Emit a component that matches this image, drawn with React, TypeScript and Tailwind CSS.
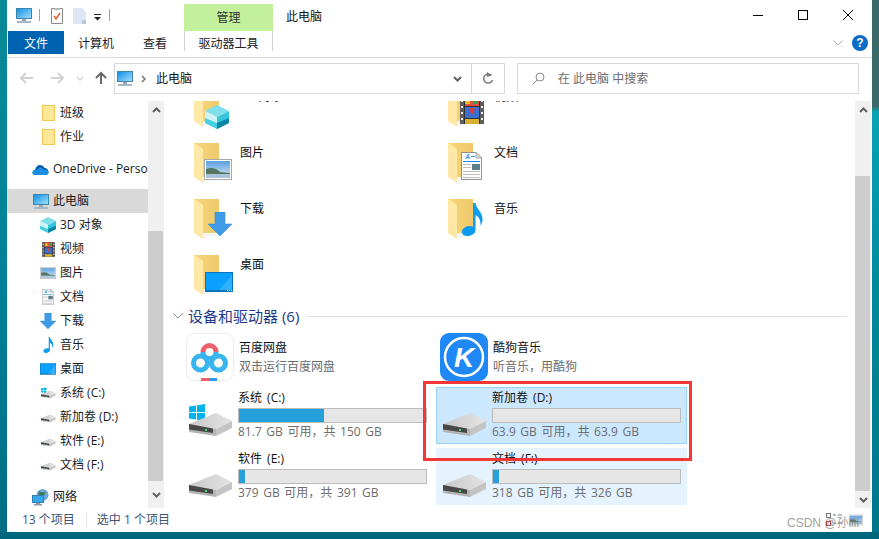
import type { ReactNode, SVGProps } from "react";

type IconProps = SVGProps<SVGSVGElement>;

function PcIcon(props: IconProps) {
  return (
    <svg viewBox="0 0 16 15" {...props}>
      <defs>
        <linearGradient id="pcScreen" x1="0" y1="0" x2="1" y2="1">
          <stop offset="0" stopColor="#0b8fe6" />
          <stop offset="1" stopColor="#a6e0ff" />
        </linearGradient>
      </defs>
      <rect x="0.5" y="0.5" width="15" height="10" fill="url(#pcScreen)" stroke="#3f86ac" />
      <rect x="6" y="11" width="4" height="2" fill="#9aa9b5" />
      <rect x="1" y="13" width="14" height="2" fill="#a8b7c4" />
    </svg>
  );
}

function Cube(props: IconProps) {
  return (
    <svg viewBox="0 0 24 24" {...props}>
      <path d="M12 0 24 6 12 12 0 6Z" fill="#7fe0ec" />
      <path d="M0 6 12 12V24L0 18Z" fill="#cdf3f6" />
      <path d="M24 6 12 12V24L24 18Z" fill="#35c5da" />
      <path d="M24 13 12 18V24L24 18Z" fill="#0a86a6" />
      <path d="M0 13 12 18V24L0 18Z" fill="#45d0e2" />
    </svg>
  );
}

function Film(props: IconProps) {
  return (
    <svg viewBox="0 0 24 27" {...props}>
      <rect width="24" height="27" fill="#5d5d5d" />
      <rect x="4" width="16" height="27" fill="#2f2f38" />
      <rect x="5" y="0" width="14" height="9" fill="#e0503c" />
      <rect x="5" y="2" width="5" height="5" fill="#e8c020" />
      <rect x="13" y="1" width="4" height="6" fill="#38a050" />
      <rect x="5" y="10" width="14" height="11" fill="#3a6fd0" />
      <path d="M9 11h6l-2 6h-2Z" fill="#d04040" />
      <rect x="5" y="22" width="14" height="5" fill="#d8b030" />
      <rect x="1" y="3" width="2" height="2" fill="#eee" />
      <rect x="1" y="9" width="2" height="2" fill="#eee" />
      <rect x="1" y="15" width="2" height="2" fill="#eee" />
      <rect x="1" y="21" width="2" height="2" fill="#eee" />
      <rect x="21" y="3" width="2" height="2" fill="#eee" />
      <rect x="21" y="9" width="2" height="2" fill="#eee" />
      <rect x="21" y="15" width="2" height="2" fill="#eee" />
      <rect x="21" y="21" width="2" height="2" fill="#eee" />
    </svg>
  );
}

function Picture(props: IconProps) {
  return (
    <svg viewBox="0 0 28 21" {...props}>
      <defs>
        <linearGradient id="picSky" x1="0" y1="0" x2="0" y2="1">
          <stop offset="0" stopColor="#5c9fe0" />
          <stop offset="1" stopColor="#d8ecf6" />
        </linearGradient>
      </defs>
      <rect x="0.5" y="0.5" width="27" height="20" fill="#fff" stroke="#a8a8a8" />
      <rect x="2" y="2" width="24" height="17" fill="url(#picSky)" />
      <path d="M2 10C8 8 12 9 16 13L26 14V16H2Z" fill="#54755f" />
      <rect x="2" y="15" width="24" height="4" fill="#a9c4d8" />
    </svg>
  );
}

function Doc(props: IconProps) {
  return (
    <svg viewBox="0 0 21 28" {...props}>
      <path d="M.5.5H15L20.5 6V27.5H.5Z" fill="#fff" stroke="#8f8f8f" />
      <path d="M15 .5V6H20.5Z" fill="#dcdcdc" stroke="#a8a8a8" />
      <text x="4" y="7" fontSize="7" fontStyle="italic" fontWeight="700" fill="#2f9be0" fontFamily="Liberation Sans, sans-serif">A</text>
      <rect x="10" y="4" width="4" height="1" fill="#2f9be0" />
      <rect x="2" y="9" width="17" height="1" fill="#1590e0" />
      <rect x="2" y="12" width="8" height="1" fill="#bbb" />
      <rect x="2" y="15" width="8" height="1" fill="#bbb" />
      <rect x="11" y="12" width="8" height="6" fill="#5d7f8c" />
      <rect x="2" y="19" width="17" height="1" fill="#bbb" />
      <rect x="2" y="22" width="17" height="1" fill="#bbb" />
      <rect x="2" y="25" width="17" height="1" fill="#bbb" />
    </svg>
  );
}

function ArrowDown(props: IconProps) {
  return (
    <svg viewBox="0 0 24 24" {...props}>
      <path d="M7 0H17V12H24L12 24 0 12H7Z" fill="#3f9be8" stroke="#2f86d0" strokeWidth="0.5" />
    </svg>
  );
}

function Note(props: IconProps) {
  return (
    <svg viewBox="0 0 21 33" {...props}>
      <path d="M11 0H13.5C14 6 21 9 20.5 17 20.3 19.5 19.5 21 18.5 23 19 17 16.5 13.5 13.5 12V27C13.5 30.5 9.5 33 5.5 33 2 33 0 31.5 0 29 0 25.5 4 23 7.5 23 9 23 10 23.2 11 23.8Z" fill="#0a9cf0" />
    </svg>
  );
}

function DesktopIcon(props: IconProps) {
  return (
    <svg viewBox="0 0 28 20" {...props}>
      <rect width="28" height="20" fill="#0a74bd" />
      <rect x="1" y="1" width="26" height="17" fill="#0aa0ff" />
      <path d="M14 18 27 3V18Z" fill="#2cb0ff" />
      <rect x="22" y="18" width="1" height="1" fill="#fff" />
      <rect x="24" y="18" width="1" height="1" fill="#fff" />
      <rect x="26" y="18" width="1" height="1" fill="#fff" />
    </svg>
  );
}

function Folder({ children }: { children?: ReactNode }) {
  return (
    <svg viewBox="0 0 40 42" className="w-[40px] h-[42px] shrink-0">
      <defs>
        <linearGradient id="folderBack" x1="0" y1="0" x2="1" y2="0">
          <stop offset="0" stopColor="#f5d77e" />
          <stop offset="1" stopColor="#f0c96a" />
        </linearGradient>
      </defs>
      <path d="M0 0H25V34H8Z" fill="url(#folderBack)" />
      <path d="M0 0 9 6V40L0 34Z" fill="#ffe8a6" />
      <path d="M8 40 9 34H25V36Z" fill="#ececec" opacity="0.5" />
      {children}
    </svg>
  );
}

function Drive({ windows, className }: { windows?: boolean; className?: string }) {
  return (
    <svg viewBox="0 0 44 33" className={className}>
      <defs>
        <linearGradient id="driveTop" x1="0" y1="0" x2="1" y2="0">
          <stop offset="0" stopColor="#c8c8c8" />
          <stop offset="1" stopColor="#e4e4e4" />
        </linearGradient>
      </defs>
      {windows && (
        <g fill="#00b4f0">
          <path d="M0 2.5 7 1.5V8H0Z" />
          <path d="M8 1.3 16 0V8H8Z" />
          <path d="M0 9H7V15.5L0 14.5Z" />
          <path d="M8 9H16V17L8 15.7Z" />
        </g>
      )}
      <path d="M0 20 27 9 43 17 27 25Z" fill="url(#driveTop)" />
      <path d="M0 20 27 25V32L0 28Z" fill="#b4b4b4" />
      <path d="M0 20 24 24.500V29L0 25.500Z" fill="#484848" />
      <path d="M27 25 43 17V24L27 32Z" fill="#c4c4c4" />
      <rect x="16" y="25" width="2" height="2" fill="#3fe060" />
    </svg>
  );
}

function Chevron({ dir, className }: { dir: "up" | "down"; className?: string }) {
  return (
    <svg viewBox="0 0 9 6" className={className}>
      <path d={dir === "up" ? "M1 5 4.500 1.500 8 5" : "M1 1 4.500 4.500 8 1"} fill="none" stroke="#606060" strokeWidth="2" />
    </svg>
  );
}

function SmallFolder() {
  return <div className="w-[13px] h-[16px] bg-[#ffe79a] border border-[#f1c94f]" />;
}

function OneDriveIcon() {
  return (
    <svg viewBox="0 0 16 11" className="w-[17px] h-[11px]">
      <path d="M3 11C1 11 0 9.800 0 8.500 0 7 1.200 6 2.500 6 3 3 5 1 7.500 1 9.500 1 11 2 11.800 3.800 14.500 4 16 6 16 8 16 10 14.800 11 13 11Z" fill="#0a5fb4" />
      <path d="M6 4.500C8 3.500 10 4 11 6 13 5.500 16 6.500 16 8.500 16 10 14.800 11 13 11H3C1 11 0 9.800 0 8.500 0 7 2 5.500 4 6.200 4.500 5.500 5 5 6 4.500Z" fill="#1b8fe0" />
    </svg>
  );
}

function NetworkIcon() {
  return (
    <svg viewBox="0 0 17 17" className="w-[17px] h-[17px]">
      <circle cx="10.500" cy="6" r="6" fill="#6fa8d8" />
      <path d="M7 2C9 4 12 3 14 3 13 6 10 7 9 9 7 8 6 5 7 2Z" fill="#3c7a50" />
      <rect x="0.500" y="6.500" width="11" height="7" fill="#39a5ea" stroke="#2f7fb0" />
      <rect x="4" y="14" width="4" height="1" fill="#8d9aa6" />
      <rect x="2" y="15" width="8" height="1.500" fill="#8d9aa6" />
    </svg>
  );
}

function BaiduIcon() {
  return (
    <svg viewBox="0 0 48 48" className="w-[48px] h-[48px] shrink-0">
      <rect x="0.500" y="0.500" width="47" height="47" rx="8" fill="#fff" stroke="#ececec" />
      <g fill="none" strokeWidth="5">
        <circle cx="14.500" cy="30" r="7" stroke="#38b4ef" />
        <circle cx="32.500" cy="30" r="7" stroke="#38b4ef" />
        <path d="M17 19A6.500 6.500 0 0 0 30 19" stroke="#38b4ef" />
        <path d="M17 19A6.500 6.500 0 0 1 30 19" stroke="#ee5f6b" />
      </g>
      <rect x="15" y="45" width="8" height="3" fill="#ee5f6b" />
      <rect x="23" y="45" width="8" height="3" fill="#2f9be8" />
    </svg>
  );
}

function KugouIcon() {
  return (
    <svg viewBox="0 0 48 48" className="w-[48px] h-[48px] shrink-0">
      <rect width="48" height="48" rx="9" fill="#1f88f5" />
      <circle cx="24" cy="24" r="19" fill="none" stroke="#fff" strokeWidth="2.500" />
      <text x="24" y="34" textAnchor="middle" fontSize="28" fontWeight="700" fontStyle="italic" fill="#fff" fontFamily="Liberation Sans, sans-serif">K</text>
    </svg>
  );
}

function SideRow({ icon, label, indent, className }: { icon: ReactNode; label: string; indent?: boolean; className?: string }) {
  return (
    <div className={`h-[24px] flex items-center whitespace-nowrap ${indent ? "pl-[33px]" : "pl-[25px]"} ${className ?? ""}`}>
      <div className={`h-[24px] flex items-center justify-center shrink-0 ${indent ? "w-[16px] mr-[4px]" : "w-[17px] mr-[4px]"}`}>{icon}</div>
      <span>{label}</span>
    </div>
  );
}

function Sidebar() {
  return (
    <div className="w-[141px] shrink-0 overflow-hidden text-[12px] leading-[16px] text-[#1a1a1a]">
      <SideRow indent icon={<SmallFolder />} label="班级" />
      <SideRow indent icon={<SmallFolder />} label="作业" />
      <SideRow icon={<OneDriveIcon />} label="OneDrive - Personal" className="mt-[8px]" />
      <SideRow icon={<PcIcon className="w-[16px] h-[15px]" />} label="此电脑" className="mt-[8px] bg-[#d9d9d9]" />
      <SideRow indent icon={<Cube className="w-[16px] h-[16px]" />} label="3D 对象" />
      <SideRow indent icon={<Film className="w-[13px] h-[15px]" />} label="视频" />
      <SideRow indent icon={<Picture className="w-[16px] h-[12px]" />} label="图片" />
      <SideRow indent icon={<Doc className="w-[12px] h-[16px]" />} label="文档" />
      <SideRow indent icon={<ArrowDown className="w-[16px] h-[16px]" />} label="下载" />
      <SideRow indent icon={<Note className="w-[11px] h-[16px]" />} label="音乐" />
      <SideRow indent icon={<DesktopIcon className="w-[16px] h-[12px]" />} label="桌面" />
      <SideRow indent icon={<Drive windows className="w-[15px] h-[12px]" />} label="系统 (C:)" />
      <SideRow indent icon={<Drive className="w-[15px] h-[12px]" />} label="新加卷 (D:)" />
      <SideRow indent icon={<Drive className="w-[15px] h-[12px]" />} label="软件 (E:)" />
      <SideRow indent icon={<Drive className="w-[15px] h-[12px]" />} label="文档 (F:)" />
      <SideRow icon={<NetworkIcon />} label="网络" className="mt-[8px]" />
    </div>
  );
}

function ScrollBar({ thumbTop, thumbBottom, className }: { thumbTop: string; thumbBottom: string; className?: string }) {
  return (
    <div className={`w-[16px] shrink-0 flex flex-col bg-[#f0f0f0] ${className ?? ""}`}>
      <div className={`${thumbTop} flex justify-center pt-[6px] shrink-0`}>
        <Chevron dir="up" className="w-[9px] h-[6px]" />
      </div>
      <div className="grow bg-[#cdcdcd] w-[15px]" />
      <div className={`${thumbBottom} flex justify-center items-center shrink-0`}>
        <Chevron dir="down" className="w-[9px] h-[6px]" />
      </div>
    </div>
  );
}

function FolderTile({ icon, label }: { icon: ReactNode; label: string }) {
  return (
    <div className="h-[56px] w-[251px] pl-[12px] pt-[2px] flex">
      <Folder>{icon}</Folder>
      <span className="ml-[6px] mt-[2px] text-[12px] leading-[16px] text-[#111]">{label}</span>
    </div>
  );
}

function AppTile({ icon, name, desc }: { icon: ReactNode; name: string; desc: string }) {
  return (
    <div className="h-[54px] w-[251px] pl-[4px] pt-[3px] flex">
      {icon}
      <div className="ml-[5px] pt-[7px] text-[12px] leading-[16px]">
        <div className="text-[#111]">{name}</div>
        <div className="mt-[3px] text-[#6d6d6d]">{desc}</div>
      </div>
    </div>
  );
}

function DriveTile({ name, used, info, windows, tone, className }: { name: string; used: number; info: string; windows?: boolean; tone?: string; className?: string }) {
  return (
    <div className={`h-[57px] w-[251px] pl-[7px] flex border ${tone ?? "border-transparent"} ${className ?? ""}`}>
      <Drive windows={windows} className="w-[44px] h-[33px] mt-[16px] -ml-px shrink-0" />
      <div className="ml-[5px] pt-[2px] text-[12px] leading-[16px] w-[189px]">
        <div className="text-[#111] [word-spacing:2px]">{name}</div>
        <div className="mt-[2px] h-[15px] border border-[#bcbcbc] bg-[#e6e6e6]">
          <div className="h-full bg-[#26a0da]" style={{ width: `${used}%` }} />
        </div>
        <div className="mt-px text-[#6d6d6d] whitespace-nowrap [word-spacing:1.500px]">{info}</div>
      </div>
    </div>
  );
}

function MainPane() {
  return (
    <div className="grow overflow-hidden pl-[18px]">
      <div className="-mt-[16px] grid grid-cols-[251px_251px] gap-x-[3px]">
        <FolderTile icon={<Cube x={11} y={18} width={24} height={24} />} label="3D 对象" />
        <FolderTile icon={<Film x={12} y={10} width={24} height={27} />} label="视频" />
        <FolderTile icon={<Picture x={10} y={16} width={28} height={21} />} label="图片" />
        <FolderTile icon={<Doc x={13} y={9} width={21} height={28} />} label="文档" />
        <FolderTile icon={<ArrowDown x={14} y={13} width={24} height={24} />} label="下载" />
        <FolderTile icon={<Note x={14} y={4} width={21} height={33} />} label="音乐" />
        <FolderTile icon={<DesktopIcon x={11} y={17} width={28} height={20} />} label="桌面" />
      </div>
      <div className="h-[14px] -ml-[9px] mr-[8px] flex items-center text-[15px] text-[#1e3a8a]">
        <svg viewBox="0 0 10 6" className="w-[10px] h-[6px] mr-[5px] shrink-0">
          <path d="M.5.5 5 5 9.500.5" fill="none" stroke="#8a8a8a" />
        </svg>
        <span className="whitespace-nowrap">设备和驱动器 (6)</span>
        <div className="grow h-px bg-[#e2e2e2] ml-[7px]" />
      </div>
      <div className="mt-[7px] grid grid-cols-[251px_251px] gap-x-[3px]">
        <AppTile icon={<BaiduIcon />} name="百度网盘" desc="双击运行百度网盘" />
        <AppTile icon={<KugouIcon />} name="酷狗音乐" desc="听音乐，用酷狗" />
        <DriveTile windows name="系统 (C:)" used={45.5} info="81.7 GB 可用，共 150 GB" className="mt-[3px]" />
        <DriveTile name="新加卷 (D:)" used={0} info="63.9 GB 可用，共 63.9 GB" tone="bg-[#cce8ff] border-[#99d1ff]" className="mt-[3px]" />
        <DriveTile name="软件 (E:)" used={3} info="379 GB 可用，共 391 GB" className="mt-[4px]" />
        <DriveTile name="文档 (F:)" used={3} info="318 GB 可用，共 326 GB" tone="bg-[#e5f3ff] border-[#e5f3ff]" className="mt-[4px]" />
      </div>
    </div>
  );
}

function TitleBar() {
  return (
    <div className="h-[31px] flex text-[12px] text-[#111]">
      <PcIcon className="w-[16px] h-[15px] ml-[9px] mt-[8px]" />
      <div className="w-px h-[12px] bg-[#a0a0a0] ml-[7px] mt-[9px]" />
      <svg viewBox="0 0 12 16" className="w-[12px] h-[16px] ml-[11px] mt-[8px]">
        <path d="M.5.500H11.500V15.500H.5Z" fill="#fff" stroke="#8a8a8a" />
        <path d="M3 8 5 11 9 5" fill="none" stroke="#e8602c" strokeWidth="1.500" />
        <rect x="3" y="0" width="6" height="2" fill="#b8b8b8" />
      </svg>
      <svg viewBox="0 0 13 16" className="w-[13px] h-[16px] ml-[10px] mt-[8px]">
        <path d="M0 0H9L13 4V16H0Z" fill="#dce6f5" />
        <path d="M9 12H13V16H9Z" fill="#b8c8dc" />
      </svg>
      <svg viewBox="0 0 7 7" className="w-[7px] h-[7px] ml-[8px] mt-[14px]">
        <rect width="7" height="1" fill="#222" />
        <path d="M0 3H7L3.500 6.500Z" fill="#222" />
      </svg>
      <div className="w-px h-[12px] bg-[#a0a0a0] ml-[8px] mt-[9px]" />
      <div className="ml-[74px] mt-[4px] w-[89px] h-[27px] bg-[#c3f09c] flex items-center justify-center text-[#333]">管理</div>
      <span className="ml-[13px] mt-[9px] leading-[16px]">此电脑</span>
      <div className="ml-auto flex mr-[2px]">
        <div className="w-[45px] flex justify-center pt-[15px]"><div className="w-[10px] h-px bg-black" /></div>
        <div className="w-[45px] flex justify-center pt-[10px]"><div className="w-[10px] h-[10px] border border-black" /></div>
        <div className="w-[45px] flex justify-center pt-[10px]">
          <svg viewBox="0 0 10 10" className="w-[10px] h-[10px]">
            <path d="M0 0 10 10M10 0 0 10" stroke="#000" fill="none" />
          </svg>
        </div>
      </div>
    </div>
  );
}

function Tabs() {
  return (
    <div className="h-[23px] flex pl-px text-[12px] leading-[25px] text-[#222]">
      <div className="w-[56px] bg-[#0063b1] text-white text-center">文件</div>
      <div className="ml-[14px]">计算机</div>
      <div className="ml-[29px]">查看</div>
      <div className="ml-[17px] w-[89px] h-[20px] border-x border-[#d0d0d0] text-center">驱动器工具</div>
      <div className="ml-auto flex items-center mr-[4px]">
        <svg viewBox="0 0 10 6" className="w-[10px] h-[6px] mr-[9px]">
          <path d="M.5.5 5 5 9.500.5" fill="none" stroke="#a8a8a8" />
        </svg>
        <div className="w-[16px] h-[16px] rounded-full bg-[#0a6cc5] text-white font-bold text-[12px] leading-[16px] text-center font-['Liberation_Sans',sans-serif]">?</div>
      </div>
    </div>
  );
}

function NavBar() {
  return (
    <div className="h-[43px] flex pt-[5px] pr-[13px] text-[12px]">
      <svg viewBox="0 0 100 16" className="w-[100px] h-[16px] ml-[8px] mt-[7px] shrink-0">
        <path d="M18 8H6M11 3 6 8 11 13" fill="none" stroke="#d2d2d2" strokeWidth="2" />
        <path d="M36 8H48M43 3 48 8 43 13" fill="none" stroke="#d2d2d2" strokeWidth="2" />
        <path d="M62 7 65 10 68 7" fill="none" stroke="#d2d2d2" strokeWidth="1.500" />
        <path d="M86 14V3M81 8 86 3 91 8" fill="none" stroke="#6a6a6a" strokeWidth="2" />
      </svg>
      <div className="ml-[-1px] w-[391px] h-[31px] shrink-0 border border-[#d9d9d9] flex items-center">
        <PcIcon className="w-[16px] h-[15px] ml-[2px]" />
        <svg viewBox="0 0 5 8" className="w-[5px] h-[8px] ml-[8px]">
          <path d="M1 1 4 4 1 7" fill="none" stroke="#707070" strokeWidth="1.500" />
        </svg>
        <span className="ml-[10px] text-[#111]">此电脑</span>
        <Chevron dir="down" className="w-[9px] h-[6px] ml-auto mr-[9px]" />
        <div className="w-px h-full bg-[#d9d9d9]" />
        <svg viewBox="0 0 12 13" className="w-[12px] h-[13px] mx-[10px]">
          <path d="M9.500 3.500A4.500 4.500 0 1 0 10.500 8" fill="none" stroke="#7a7a7a" strokeWidth="1.500" />
          <path d="M5 0 9.500 3.500 5 5Z" fill="#7a7a7a" />
        </svg>
      </div>
      <div className="ml-[12px] grow h-[31px] border border-[#d9d9d9] flex items-center text-[#6d6d6d]">
        <svg viewBox="0 0 13 13" className="w-[13px] h-[13px] ml-[14px]">
          <circle cx="8" cy="5" r="4" fill="none" stroke="#8a8a8a" />
          <path d="M5 8 .5 12.500" stroke="#8a8a8a" />
        </svg>
        <span className="ml-[13px]">在 此电脑 中搜索</span>
      </div>
    </div>
  );
}

function StatusBar() {
  return (
    <div className="h-[24px] flex items-center pl-[15px] pr-[9px] text-[12px] text-[#3d5573]">
      <span>13 个项目</span>
      <div className="w-px h-[14px] bg-[#e8e8e8] ml-[11px] mr-[10px]" />
      <span>选中 1 个项目</span>
      <div className="ml-auto flex items-center gap-[7px]">
        <svg viewBox="0 0 16 14" className="w-[16px] h-[14px]">
          <rect x="0.500" y="0.500" width="4" height="4" fill="none" stroke="#777" />
          <rect x="0.500" y="8.500" width="4" height="4" fill="#fff" stroke="#c03030" />
          <path d="M7 2H10M12 2H16M7 10H10M12 10H16" stroke="#777" />
        </svg>
        <Picture className="w-[14px] h-[14px]" />
      </div>
    </div>
  );
}

export default function App() {
  return (
    <div className="relative w-[879px] h-[539px] flex flex-col bg-[#00667c] overflow-hidden font-['Open_Sans','Noto_Sans_CJK_SC',sans-serif]">
      <div className="flex h-[532px]">
        <div className="w-[7px] bg-[linear-gradient(180deg,#0a8a96,#00829a_50%,#006d84)]" />
        <div className="w-[865px] bg-white flex flex-col">
          <TitleBar />
          <Tabs />
          <div className="mt-[3px] h-px bg-[#dcdcdc]" />
          <NavBar />
          <div className="h-[407px] flex">
            <Sidebar />
            <ScrollBar thumbTop="h-[130px]" thumbBottom="h-[27px]" />
            <MainPane />
            <ScrollBar thumbTop="h-[75px]" thumbBottom="h-[17px]" className="mr-px" />
          </div>
          <StatusBar />
        </div>
        <div className="w-[7px] bg-[linear-gradient(180deg,#3c6a6a_0,#3c6a6a_20%,#06a4b4_21%,#00859a_60%,#00758c)]" />
      </div>
      <div className="absolute left-[423px] top-[381px] w-[269px] h-[80px] border-[3px] border-[#f33737]" />
      <div className="absolute left-[787px] top-[514px] text-[12px] leading-[18px] text-[#8a8a8a] opacity-80 font-['Liberation_Sans','Noto_Sans_CJK_SC',sans-serif]">CSDN @孙llll</div>
    </div>
  );
}
